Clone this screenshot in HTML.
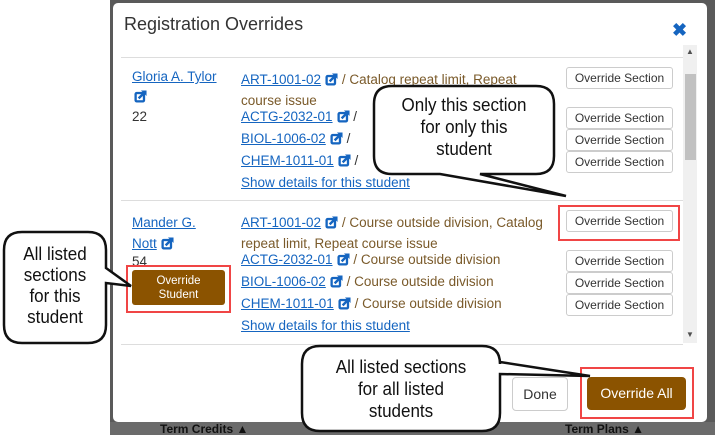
<!DOCTYPE html>
<html><head><style>
body{margin:0;width:715px;height:435px;position:relative;overflow:hidden;background:#fff;font-family:"Liberation Sans",Arial,sans-serif;}
.bg{position:absolute;left:110px;top:0;width:605px;height:435px;background:#5a5a5a;}
.bg2{position:absolute;left:110px;top:422px;width:605px;height:13px;background:#6b6b6b;}
.modal{position:absolute;left:113px;top:3px;width:594px;height:419px;background:#fff;border-radius:5px;}
.t{position:absolute;font-size:13.5px;color:#333;white-space:nowrap;}
a{color:#1565c0;text-decoration:underline;}
.br{color:#7a5a2a;}
.ob{position:absolute;left:566px;width:105px;height:20px;border:1px solid #ccc;border-radius:3px;font-size:12px;text-align:center;line-height:20px;color:#333;background:#fff;}
.ic{display:inline-block;width:13px;height:13px;vertical-align:-2px;margin-left:4px;}
.red{position:absolute;border:2.5px solid #f04545;}
.cb{position:absolute;text-align:center;font-size:18.5px;color:#111;line-height:22px;white-space:nowrap;transform:scaleX(0.92);}
</style></head><body>
<svg width="0" height="0" style="position:absolute"><defs><symbol id="ext" viewBox="0 0 14 14"><rect x="0.5" y="2" width="11.5" height="11.5" rx="2.5" fill="#1565c0"/><rect x="3" y="4.5" width="6.5" height="6.5" fill="#fff"/><path d="M5 9 L12 2" stroke="#1565c0" stroke-width="2.6"/><path d="M7.5 0.5 H13.5 V6.5 Z" fill="#1565c0"/></symbol></defs></svg>
<div class="bg"></div><div class="bg2"></div>
<div class="t" style="left:160px;top:422px;font-size:12px;color:#111;font-weight:bold">Term Credits ▲</div>
<div class="t" style="left:565px;top:422px;font-size:12px;color:#111;font-weight:bold">Term Plans ▲</div>
<div class="modal"></div>
<div class="t" style="left:124px;top:14px;font-size:18px;color:#333">Registration Overrides</div>
<div class="t" style="left:672px;top:20px;font-size:18px;color:#1565c0;font-weight:bold">✖</div>
<div style="position:absolute;left:121px;top:57px;width:562px;height:1px;background:#ddd"></div>
<div style="position:absolute;left:683px;top:45px;width:14px;height:298px;background:#f0f0f0"></div>
<div style="position:absolute;left:685px;top:74px;width:11px;height:86px;background:#c1c1c1"></div>
<div class="t" style="left:686px;top:47px;font-size:8px;color:#505050">▲</div>
<div class="t" style="left:686px;top:330px;font-size:8px;color:#505050">▼</div>

<div class="t" style="left:132px;top:69px"><a>Gloria A. Tylor</a></div>
<div class="t" style="left:134px;top:89px"><svg class="ic" style="margin:0"><use href="#ext"/></svg></div>
<div class="t" style="left:132px;top:109px">22</div>
<div class="t" style="left:241px;top:69px;line-height:21px"><a>ART-1001-02</a><svg class="ic"><use href="#ext"/></svg> <span class="br">/ Catalog repeat limit, Repeat<br>course issue</span></div>
<div class="t" style="left:241px;top:109px"><a>ACTG-2032-01</a><svg class="ic"><use href="#ext"/></svg> /</div>
<div class="t" style="left:241px;top:131px"><a>BIOL-1006-02</a><svg class="ic"><use href="#ext"/></svg> /</div>
<div class="t" style="left:241px;top:153px"><a>CHEM-1011-01</a><svg class="ic"><use href="#ext"/></svg> /</div>
<div class="t" style="left:241px;top:175px"><a>Show details for this student</a></div>
<div class="ob" style="top:67px">Override Section</div>
<div class="ob" style="top:107px">Override Section</div>
<div class="ob" style="top:129px">Override Section</div>
<div class="ob" style="top:151px">Override Section</div>
<div style="position:absolute;left:121px;top:200px;width:562px;height:1px;background:#ddd"></div>

<div class="t" style="left:132px;top:212px;line-height:21px"><a>Mander G.</a><br><a>Nott</a><svg class="ic"><use href="#ext"/></svg></div>
<div class="t" style="left:132px;top:254px">54</div>
<div style="position:absolute;left:132px;top:270px;width:93px;height:35px;background:#8b5300;border-radius:3px;color:#fff;font-size:11.5px;text-align:center;line-height:14px;padding-top:4px;box-sizing:border-box">Override<br>Student</div>
<div class="red" style="left:126px;top:265px;width:101px;height:44px"></div>
<div class="t" style="left:241px;top:212px;line-height:21px"><a>ART-1001-02</a><svg class="ic"><use href="#ext"/></svg> <span class="br">/ Course outside division, Catalog<br>repeat limit, Repeat course issue</span></div>
<div class="t" style="left:241px;top:252px"><a>ACTG-2032-01</a><svg class="ic"><use href="#ext"/></svg> <span class="br">/ Course outside division</span></div>
<div class="t" style="left:241px;top:274px"><a>BIOL-1006-02</a><svg class="ic"><use href="#ext"/></svg> <span class="br">/ Course outside division</span></div>
<div class="t" style="left:241px;top:296px"><a>CHEM-1011-01</a><svg class="ic"><use href="#ext"/></svg> <span class="br">/ Course outside division</span></div>
<div class="t" style="left:241px;top:318px"><a>Show details for this student</a></div>
<div class="ob" style="top:210px">Override Section</div>
<div class="red" style="left:558px;top:205px;width:118px;height:32px"></div>
<div class="ob" style="top:250px">Override Section</div>
<div class="ob" style="top:272px">Override Section</div>
<div class="ob" style="top:294px">Override Section</div>
<div style="position:absolute;left:121px;top:344px;width:562px;height:1px;background:#ddd"></div>

<div style="position:absolute;left:512px;top:377px;width:56px;height:34px;border:1px solid #ccc;border-radius:4px;box-sizing:border-box;font-size:14px;color:#333;text-align:center;line-height:32px;background:#fff">Done</div>
<div style="position:absolute;left:587px;top:377px;width:99px;height:33px;background:#8b5300;border-radius:4px;color:#fff;font-size:14px;text-align:center;line-height:33px">Override All</div>
<div class="red" style="left:580px;top:367px;width:110px;height:48px"></div>

<svg width="715" height="435" style="position:absolute;left:0;top:0" fill="#fff" stroke="#111" stroke-width="2.5">
<path d="M392,86 H536 Q554,86 554,104 V156 Q554,174 536,174 H480 L566,196 L440,174 H392 Q374,174 374,156 V104 Q374,86 392,86 Z"/>
<path d="M22,232 H88 Q106,232 106,250 V268 L131,286 L106,283 V325 Q106,343 88,343 H22 Q4,343 4,325 V250 Q4,232 22,232 Z"/>
<path d="M320,346 H482 Q500,346 500,364 V362 L590,376 L500,374 V413 Q500,431 482,431 H320 Q302,431 302,413 V364 Q302,346 320,346 Z"/>
</svg>
<div class="cb" style="left:374px;top:94px;width:180px">Only this section<br>for only this<br>student</div>
<div class="cb" style="left:4px;top:243px;width:102px;line-height:21px">All listed<br>sections<br>for this<br>student</div>
<div class="cb" style="left:302px;top:356px;width:198px">All listed sections<br>for all listed<br>students</div>
</body></html>
